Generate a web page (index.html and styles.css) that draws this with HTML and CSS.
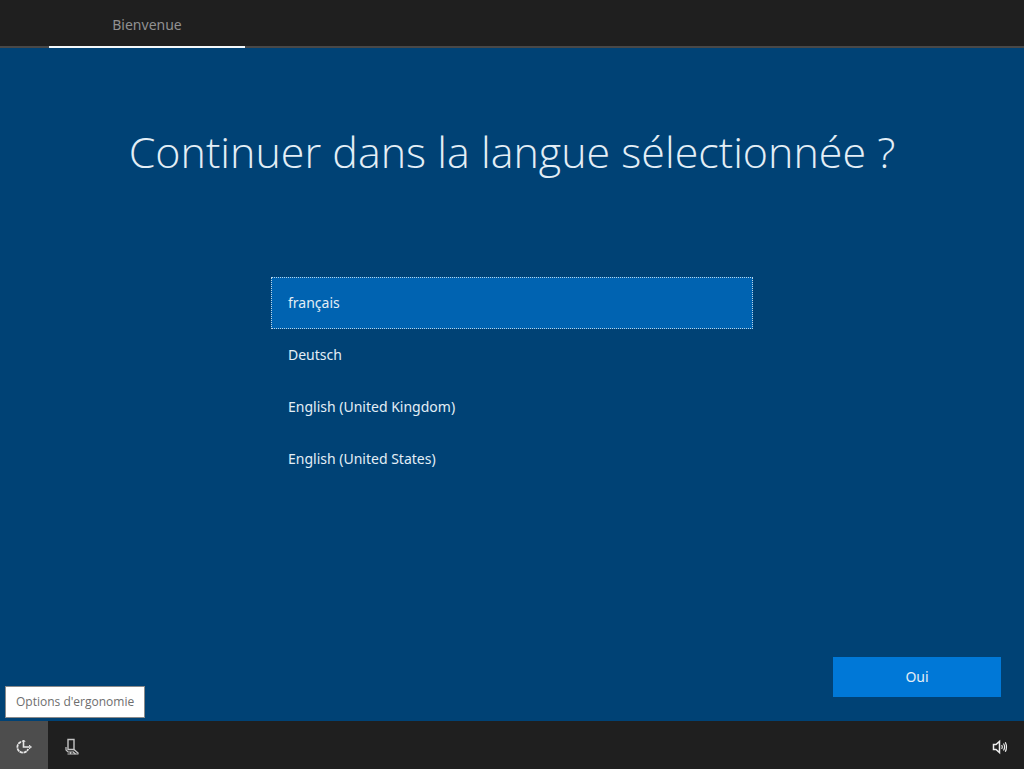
FILE: index.html
```html
<!DOCTYPE html>
<html lang="fr">
<head>
    <meta charset="UTF-8">
    <meta name="viewport" content="width=device-width, initial-scale=1.0">
    <title>Bienvenue</title>
    <link rel="stylesheet" href="styles.css">
</head>
<body>
    <nav class="steps">
        <a href="#langue" class="step">Bienvenue</a>
    </nav>

    <form class="content" id="langue">
        <h1>Continuer dans la langue sélectionnée ?</h1>

        <div class="languages" role="radiogroup" aria-label="Langue">
            <label class="language"><input type="radio" name="language" value="fr" checked>français</label>
            <label class="language"><input type="radio" name="language" value="de">Deutsch</label>
            <label class="language"><input type="radio" name="language" value="en-GB">English (United Kingdom)</label>
            <label class="language"><input type="radio" name="language" value="en-US">English (United States)</label>
        </div>

        <div class="actions">
            <button type="submit" class="confirm">Oui</button>
        </div>
    </form>

    <footer class="taskbar">
        <button type="button" class="tool active" aria-labelledby="ergonomics-tip">
            <svg width="18" height="18" viewBox="0 0 18 18" fill="none" stroke="#e6e6e6">
                <path d="M6 3.8A5.6 5.6 0 1 0 13.2 11" stroke-width="1.8" stroke-dasharray="3.4 0.6"/>
                <path d="M8.5 2v7h7" stroke-width="1.6"/>
                <path d="M6.8 4l1.7-2 1.7 2M14 7.2l2.5 1.8-2.5 1.8" stroke-width="1"/>
            </svg>
        </button>
        <div class="tooltip" id="ergonomics-tip" role="tooltip">Options d'ergonomie</div>
        <button type="button" class="tool" aria-label="Microphone">
            <svg width="18" height="18" viewBox="0 0 18 18" fill="none" stroke="#c4c4c4">
                <path d="M5 1.5h6v10H5z" stroke-width="1.4"/>
                <path d="M3 9v3l2 2h4M7.5 14v2M4.5 16h11" stroke-width="1.2"/>
                <path d="M11 11.5l4.5 4M9.5 13.5l3 2.5" stroke-width="1.4"/>
            </svg>
        </button>
        <button type="button" class="tool volume" aria-label="Volume">
            <svg width="18" height="18" viewBox="0 0 18 18" fill="none" stroke="#ececec">
                <path d="M2.5 6.5h2.5l3.5-3v11l-3.5-3h-2.5z" stroke-width="1.5"/>
                <path d="M10.7 7q1.3 2 0 4M12.5 5.5q2.2 3.5 0 7M14.3 4.2q2.4 4.8 0 9.6" stroke-width="1.2"/>
            </svg>
        </button>
    </footer>
</body>
</html>
```

FILE: styles.css
```css
* {
    margin: 0;
    padding: 0;
    box-sizing: border-box;
}

body {
    font-family: "Noto Sans", "Open Sans", sans-serif;
    font-size: 14px;
    line-height: 20px;
    color: #e3eef6;
    background: #004275;
    min-height: 100vh;
    display: flex;
    flex-direction: column;
}

button {
    font: inherit;
    color: inherit;
    border: none;
    cursor: pointer;
}

/* Top bar */
.steps {
    display: flex;
    height: 48px;
    padding-left: 49px;
    background: #1f1f1f;
    box-shadow: inset 0 -2px #484848;
}

.step {
    width: 196px;
    padding-top: 15px;
    border-bottom: 2px solid #f4f8fa;
    color: #919191;
    text-align: center;
    text-decoration: none;
}

/* Language choice */
.content {
    flex: 1;
    display: flex;
    flex-direction: column;
    align-items: center;
    padding: 72px 23px 24px;
}

h1 {
    font-family: "Open Sans", "Noto Sans", sans-serif;
    font-size: 43px;
    font-weight: 300;
    line-height: 64px;
    text-align: center;
    margin-bottom: 93px;
}

.languages {
    width: 100%;
    max-width: 482px;
}

.language {
    display: block;
    padding: 15px 16px;
    border: 1px solid transparent;
    cursor: pointer;
}

.language:has(input:checked) {
    background: #0063b1;
    border: 1px dotted #b9d5e8;
}

.language input {
    appearance: none;
    position: absolute;
}

.actions {
    width: 100%;
    margin-top: auto;
    display: flex;
    justify-content: flex-end;
}

.confirm {
    width: 168px;
    height: 40px;
    background: #0078d7;
}

/* Bottom bar */
.taskbar {
    position: relative;
    display: flex;
    height: 48px;
    background: #1f1f1f;
}

.tool {
    width: 48px;
    padding-top: 3px;
    display: flex;
    align-items: center;
    justify-content: center;
    background: none;
}

.tool.active {
    background: #4d4d4d;
}

.volume {
    margin-left: auto;
}

.tooltip {
    position: absolute;
    left: 5px;
    bottom: 51px;
    padding: 5px 10px;
    border: 1px solid #8a8a8a;
    background: #fff;
    color: #6e6e6e;
    font-family: "Open Sans", "Noto Sans", sans-serif;
    font-size: 12px;
}
```
